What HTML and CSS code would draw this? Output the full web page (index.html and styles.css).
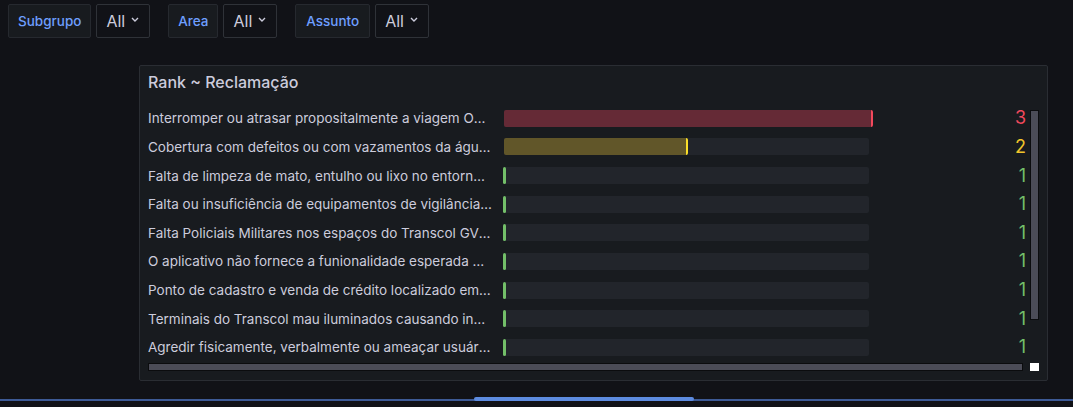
FILE: index.html
```html
<!DOCTYPE html>
<html lang="pt">
<head>
<meta charset="utf-8">
<title>Rank ~ Reclamação</title>
<link rel="stylesheet" href="styles.css">
</head>
<body>
<div class="vars">
  <div class="var">
    <span class="var-label">Subgrupo</span>
    <span class="var-select">All <svg class="chev" viewBox="0 0 8 5" width="8" height="5"><path d="M1 1 L4 4 L7 1" fill="none" stroke="#ccccdc" stroke-width="1.4"/></svg></span>
  </div>
  <div class="var">
    <span class="var-label">Area</span>
    <span class="var-select">All <svg class="chev" viewBox="0 0 8 5" width="8" height="5"><path d="M1 1 L4 4 L7 1" fill="none" stroke="#ccccdc" stroke-width="1.4"/></svg></span>
  </div>
  <div class="var">
    <span class="var-label wide">Assunto</span>
    <span class="var-select">All <svg class="chev" viewBox="0 0 8 5" width="8" height="5"><path d="M1 1 L4 4 L7 1" fill="none" stroke="#ccccdc" stroke-width="1.4"/></svg></span>
  </div>
</div>

<div class="panel">
  <div class="panel-title">Rank ~ Reclamação</div>
  <div class="panel-body">
    <div class="rows">
      <div class="row red"><span class="label">Interromper ou atrasar propositalmente a viagem Ocasionando atrasos</span><span class="track"><span class="fill" style="width:369px"></span></span><span class="value">3</span></div>
      <div class="row yellow"><span class="label">Cobertura com defeitos ou com vazamentos da água da chuva</span><span class="track"><span class="fill" style="width:184px"></span></span><span class="value">2</span></div>
      <div class="row green"><span class="label">Falta de limpeza de mato, entulho ou lixo no entorno do terminal</span><span class="track"><span class="fill" style="width:3px"></span></span><span class="value">1</span></div>
      <div class="row green"><span class="label">Falta ou insuficiência de equipamentos de vigilância eletrônica</span><span class="track"><span class="fill" style="width:3px"></span></span><span class="value">1</span></div>
      <div class="row green"><span class="label">Falta Policiais Militares nos espaços do Transcol GV e terminais</span><span class="track"><span class="fill" style="width:3px"></span></span><span class="value">1</span></div>
      <div class="row green"><span class="label">O aplicativo não fornece a funionalidade esperada e necessária</span><span class="track"><span class="fill" style="width:3px"></span></span><span class="value">1</span></div>
      <div class="row green"><span class="label">Ponto de cadastro e venda de crédito localizado em local distante</span><span class="track"><span class="fill" style="width:3px"></span></span><span class="value">1</span></div>
      <div class="row green"><span class="label">Terminais do Transcol mau iluminados causando insegurança</span><span class="track"><span class="fill" style="width:3px"></span></span><span class="value">1</span></div>
      <div class="row green"><span class="label">Agredir fisicamente, verbalmente ou ameaçar usuário ou colega</span><span class="track"><span class="fill" style="width:3px"></span></span><span class="value">1</span></div>
    </div>
    <div class="vscroll"><div class="vthumb"></div></div>
    <div class="hscroll"></div>
    <div class="corner"></div>
  </div>
</div>

<div class="bottom">
  <div class="bottom-line"></div>
  <div class="bottom-handle"></div>
</div>
</body>
</html>
```

FILE: styles.css
```css
html, body {
  margin: 0;
  padding: 0;
  background: #111217;
  font-family: Inter, "Noto Sans", "Liberation Sans", sans-serif;
  color: #ccccdc;
  width: 1073px;
  height: 407px;
  overflow: hidden;
}

.vars {
  display: flex;
  gap: 18px;
  padding: 4px 8px 0 8px;
  height: 34px;
}

.var {
  display: flex;
  gap: 5px;
}

.var-label {
  display: flex;
  align-items: center;
  padding: 0 9px;
  height: 34px;
  box-sizing: border-box;
  background: #181b1f;
  border: 1px solid #26292f;
  border-radius: 2px;
  color: #6e9fff;
  font-size: 13.5px;
  font-weight: 500;
}

.var-label.wide {
  padding: 0 10px;
}

.var-select {
  display: flex;
  align-items: center;
  gap: 6px;
  padding: 0 10px 0 9px;
  height: 34px;
  box-sizing: border-box;
  background: #111217;
  border: 1px solid #2f3238;
  border-radius: 2px;
  color: #ccccdc;
  font-size: 16px;
}

.chev {
  margin-top: -3px;
}

.panel {
  margin: 27px 0 0 139px;
  width: 909px;
  height: 316px;
  box-sizing: border-box;
  background: #181b1f;
  border: 1px solid #2a2d33;
  border-radius: 2px;
}

.panel-title {
  height: 32px;
  line-height: 32px;
  padding-left: 8px;
  font-size: 16px;
  font-weight: 500;
  color: #ccccdc;
}

.panel-body {
  display: grid;
  grid-template-columns: 882px 9px;
  grid-template-rows: 257.6px 9px;
  row-gap: 1px;
  padding: 6px 0 0 8px;
}

.rows {
  display: flex;
  flex-direction: column;
}

.row {
  height: 28.625px;
  display: grid;
  grid-template-columns: 348px 365px 149px;
  column-gap: 8px;
  align-items: center;
  margin-right: 4px;
}

.label {
  font-size: 13.5px;
  white-space: nowrap;
  overflow: hidden;
  text-overflow: ellipsis;
  color: #ccccdc;
  margin-right: 4px;
}

.track {
  position: relative;
  display: block;
  height: 17px;
  background: #22252b;
  border-radius: 2px;
}

.fill {
  position: absolute;
  left: 0;
  top: 0;
  height: 17px;
  box-sizing: border-box;
  border-radius: 2px;
}

.row.red .fill { background: #652a36; border-right: 2px solid #f2495c; }
.row.yellow .fill { background: #615629; border-right: 2px solid #fade2a; }
.row.green .fill { background: #73bf69; left: -1px; }

.value {
  justify-self: end;
  font-size: 18px;
  line-height: 1;
}
.row.red .value { color: #f2495c; }
.row.yellow .value { color: #f0c42b; }
.row.green .value { color: #73bf69; }

.vscroll {
  padding-top: 6px;
}

.vthumb {
  height: 210px;
  box-sizing: border-box;
  border: 1px solid #0b0c0e;
  background: #4b4c57;
}

.hscroll {
  width: 875px;
  height: 8px;
  box-sizing: border-box;
  border: 1px solid #0b0c0e;
  background: #4b4c57;
}

.corner {
  width: 9px;
  height: 8px;
  background: #ffffff;
}

.bottom {
  position: relative;
  margin-top: 16px;
  height: 6px;
}

.bottom-line {
  position: absolute;
  left: 0;
  right: 0;
  top: 2px;
  height: 2px;
  background: #3d5a96;
}

.bottom-handle {
  position: absolute;
  left: 474px;
  width: 220px;
  top: 0;
  height: 4px;
  border-radius: 2px;
  background: #5d8be0;
}
```
